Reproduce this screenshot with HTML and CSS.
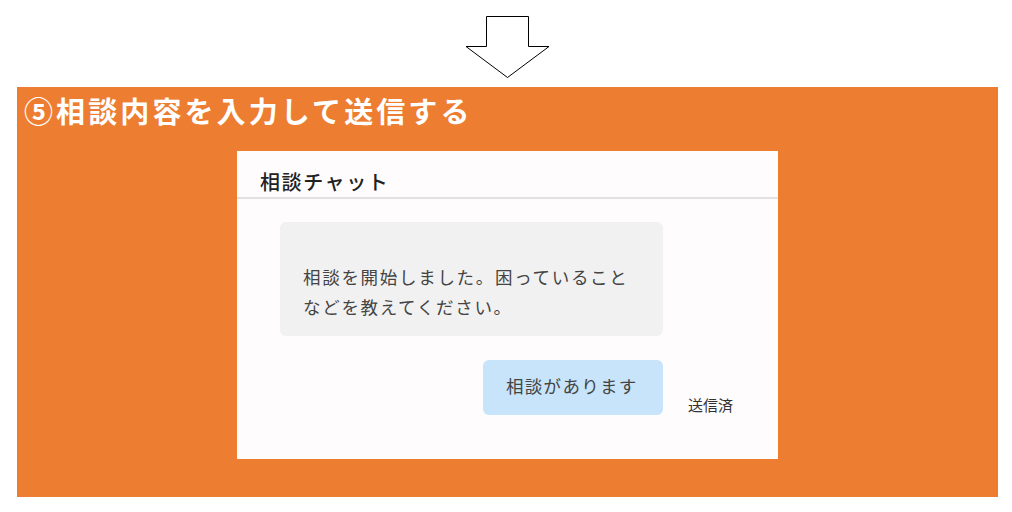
FILE: index.html
```html
<!DOCTYPE HTML>
<html>
<head>
<title>相談内容を入力して送信する</title>
<link rel="stylesheet" href="styles.css">
</head>
<body>
<div class="arrow-row">
    <svg class="arrow" width="86" height="64" viewBox="0 0 86 64">
        <path d="M21.5 0.5 H63.5 V30.5 H84 L42.5 61.5 L1 30.5 H21.5 Z" fill="#fff" stroke="#000" stroke-width="1"/>
    </svg>
</div>

<div class="panel">
    <h1 class="step-title">⑤相談内容を入力して送信する</h1>

    <div class="card">
        <div class="card-header">相談チャット</div>
        <div class="chat">
            <div class="bubble bubble-in">相談を開始しました。困っていること<br>などを教えてください。</div>
            <div class="row-out">
                <div class="bubble bubble-out">相談があります</div>
                <span class="status">送信済</span>
            </div>
        </div>
    </div>
</div>
</body>
</html>
```
FILE: styles.css
```css
body {margin: 0; background: #fff; font-family: "Noto Sans CJK JP", "Noto Sans", sans-serif;}
.arrow-row {height: 87px; display: flex; justify-content: flex-start;}
.arrow {margin: 16px 0 0 465px; display: block;}
.panel {margin-left: 17px; width: 981px; height: 410px; background: #ed7d31; box-sizing: border-box; padding-top: 1px;}
.step-title {margin: 2px 0 0 7px; height: 61px; color: #fff; font-size: 29px; font-weight: bold; letter-spacing: 3.1px; line-height: 40px;}
.card {margin-left: 220px; width: 541px; height: 308px; background: #fffcfd;}
.card-header {height: 46px; border-bottom: 2px solid #e2e0e1; padding-left: 23px; font-size: 20px; font-weight: 500; color: #222; line-height: 61px; letter-spacing: 1.6px; overflow: hidden;}
.chat {padding: 23px 0 0 43px;}
.bubble {border-radius: 6px; color: #444; font-size: 17.5px; letter-spacing: 1.3px; box-sizing: border-box;}
.bubble-in {width: 383px; height: 114px; background: #f2f1f1; padding: 40px 0 0 23px; line-height: 30px; letter-spacing: 1.7px;}
.row-out {display: flex; align-items: flex-end; margin: 24px 0 0 203px;}
.bubble-out {width: 180px; height: 55px; background: #c8e4fb; padding: 11px 0 0 23px; line-height: 30px;}
.status {margin: 0 0 0 25px; font-size: 15px; color: #333; line-height: 17px; padding-bottom: 2px;}
```
